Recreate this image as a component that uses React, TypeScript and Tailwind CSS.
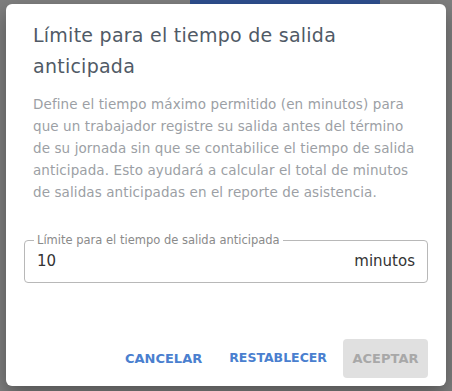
export default function App() {
  const font = { fontFamily: '"DejaVu Sans", "Noto Sans", sans-serif' };
  return (
    <div className="relative w-[452px] h-[391px] bg-[#7f7f7f] overflow-hidden" style={font}>
      {/* underlying page, dimmed */}
      <div className="absolute left-[190px] top-0 w-[190px] h-[5px] bg-[#2e4f8f]" />
      <div className="absolute inset-0 flex items-start justify-center pt-[4px]">
        <div className="w-[440px] h-[382px] bg-white rounded-[6px] shadow-[0_8px_20px_rgba(0,0,0,0.35)] flex flex-col">
          <h2 className="ml-[27px] w-[340px] pt-[16px] text-[19px] leading-[31px] tracking-[0.25px] text-[#505a66] font-normal">
            Límite para el tiempo de salida anticipada
          </h2>
          <p className="ml-[27px] w-[400px] mt-[11px] text-[13.5px] leading-[22px] tracking-[0.1px] text-[#9c9fa5] whitespace-nowrap">
            Define el tiempo máximo permitido (en minutos) para<br />
            que un trabajador registre su salida antes del término<br />
            de su jornada sin que se contabilice el tiempo de salida<br />
            anticipada. Esto ayudará a calcular el total de minutos<br />
            de salidas anticipadas en el reporte de asistencia.
          </p>
          <div className="px-[18px] mt-[37px]">
            <div className="relative border border-[#b8b8b8] rounded-[4px] h-[43px] px-[12px] flex items-center justify-between text-[15px] text-[#333]">
              <span className="absolute left-[9px] -top-[8px] bg-white px-[3px] text-[11.5px] leading-[14px] text-[#8a8a8a]">
                Límite para el tiempo de salida anticipada
              </span>
              <span>10</span>
              <span>minutos</span>
            </div>
          </div>
          <div className="mt-auto mb-[8px] pr-[18px] flex justify-end items-center">
            <button className="h-[39px] px-[8px] text-[13px] font-bold text-[#4a7fcf]">CANCELAR</button>
            <button className="ml-[11px] h-[39px] px-[8px] text-[12.5px] font-bold text-[#4a7fcf]">RESTABLECER</button>
            <button className="ml-[8px] h-[39px] w-[85px] rounded-[4px] bg-[#e0e0e0] text-[13px] font-bold text-[#a8a8a8]">ACEPTAR</button>
          </div>
        </div>
      </div>
    </div>
  );
}
